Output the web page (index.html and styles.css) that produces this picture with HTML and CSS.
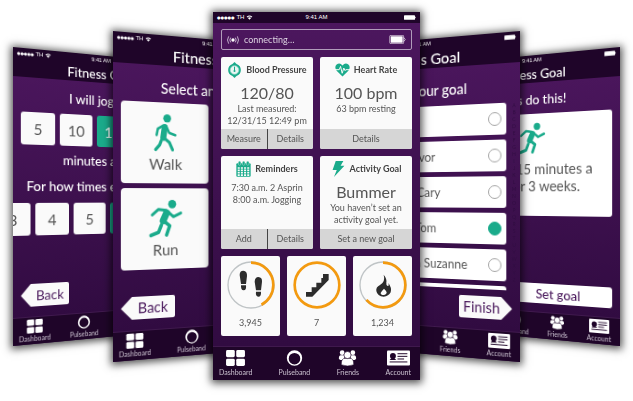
FILE: index.html
```html
<!DOCTYPE html>
<html lang="en">
<head>
<meta charset="utf-8">
<title>Fitness app</title>
<link rel="stylesheet" href="styles.css">
</head>
<body>
<svg class="defs" aria-hidden="true">
  <symbol id="wifi" viewBox="0 0 18 14"><path d="M1 5Q9-2 17 5L15 7Q9 2 3 7ZM4.500 8.500Q9 4.500 13.500 8.500L9 13.500Z" fill="currentColor"/></symbol>
  <symbol id="walk" viewBox="140 272 84 124">
    <g fill="none" stroke="currentColor" stroke-linecap="round" stroke-linejoin="round">
      <path d="M173 312 156 322 152 342M186 318 194 334 214 341" stroke-width="8"/>
      <path d="M179 316 174 350" stroke-width="20"/>
      <path d="M176 350 194 364 205 388M167 360 162 373 149 388" stroke-width="10"/>
    </g><circle cx="187" cy="288" r="13" fill="currentColor"/>
  </symbol>
  <symbol id="run" viewBox="125 25 112 120">
    <g fill="none" stroke="currentColor" stroke-linecap="round" stroke-linejoin="round">
      <path d="M182 60 158 57 138 74M190 66 206 80 230 69" stroke-width="9"/>
      <path d="M184 68 173 92" stroke-width="22"/>
      <path d="M176 94 194 108 184 136M167 106 158 128 134 137" stroke-width="11"/>
    </g><circle cx="202" cy="41" r="13" fill="currentColor"/>
  </symbol>
  <symbol id="dashboard" viewBox="0 0 52 44"><g fill="#fff"><rect width="24" height="20" rx="4"/><rect x="28" width="24" height="20" rx="4"/><rect y="24" width="24" height="20" rx="4"/><rect x="28" y="24" width="24" height="20" rx="4"/></g></symbol>
  <symbol id="pulse" viewBox="0 0 50 50"><path fill="#fff" fill-rule="evenodd" d="M25 1A24 24 0 1 0 25 49 24 24 0 1 0 25 1ZM25 9A18 18 0 1 1 25 45 18 18 0 1 1 25 9Z"/></symbol>
  <symbol id="friends" viewBox="0 0 60 54"><g fill="#fff"><circle cx="12" cy="9" r="8"/><circle cx="48" cy="9" r="8"/><path d="M1 30Q0 17 9 18H20L18 34H6ZM59 30Q60 17 51 18H40L42 34H54Z"/><g stroke="#1f0529" stroke-width="2"><path d="M9 50Q8 28 22 28H38Q52 28 51 50Q30 58 9 50Z"/><circle cx="30" cy="17" r="12"/></g></g></symbol>
  <symbol id="account" viewBox="0 0 70 46"><rect width="70" height="46" rx="3" fill="#fff"/><g stroke="#1f0529" stroke-width="3"><path d="M32 10H62M32 18H62M32 26H52M8 35H62"/></g><circle cx="18" cy="17" r="9" fill="#1f0529"/><path d="M8 29Q18 16 28 29Z" fill="#1f0529"/></symbol>
  <symbol id="gauge" viewBox="0 0 40 48"><path d="M20 0 26 6Q39 11 39 24 39 37 26 42L20 48 14 42Q1 37 1 24 1 11 14 6Z" fill="#1aab8b"/><circle cx="20" cy="24" r="13" fill="#e9f6f3" stroke="#8fd3c4" stroke-width="2"/><path d="M20 14V26" stroke="#1aab8b" stroke-width="3"/><circle cx="20" cy="27" r="3" fill="#1aab8b"/></symbol>
  <symbol id="heart" viewBox="0 0 46 40"><path d="M23 40 5 22Q-3 10 5 3 15-4 23 6 31-4 41 3 49 10 41 22Z" fill="#1aab8b"/><path d="M0 19H13L17 9 22 30 27 14 31 22 33 19H46" fill="none" stroke="#fafafa" stroke-width="3"/></symbol>
  <symbol id="calendar" viewBox="0 0 44 46"><rect x="1" y="6" width="42" height="40" rx="3" fill="#1aab8b"/><g fill="#1aab8b" stroke="#fafafa" stroke-width="1"><rect x="7" y="0" width="7" height="12" rx="3"/><rect x="19" y="0" width="7" height="12" rx="3"/><rect x="31" y="0" width="7" height="12" rx="3"/></g><path d="M5 20H39M5 27H39M5 34H39M5 41H39" stroke="#fafafa" stroke-width="5" stroke-dasharray="6 3.300"/></symbol>
  <symbol id="bolt" viewBox="0 0 34 46"><path d="M9 0H31L23 14H34L4 46 12 26H0Z" fill="#1aab8b"/></symbol>
  <symbol id="signal" viewBox="0 0 36 24"><circle cx="18" cy="12" r="5" fill="#fff"/><g fill="none" stroke="#d9cfe0" stroke-width="2.500"><path d="M11 5Q6 12 11 19M25 5Q30 12 25 19M5 1Q-2 12 5 23M31 1Q38 12 31 23"/></g></symbol>
  <symbol id="battery" viewBox="0 0 50 28"><rect x="1" y="1" width="43" height="26" rx="3" fill="none" stroke="#fff" stroke-width="2"/><rect x="4" y="4" width="37" height="20" fill="#fff"/><path d="M45 8Q53 14 45 20" fill="none" stroke="#fff" stroke-width="2"/></symbol>
  <symbol id="cell" viewBox="0 0 36 14"><rect width="33" height="14" rx="2" fill="#fff"/><path d="M34 4Q38 7 34 10Z" fill="#fff"/></symbol>
</svg>

<main class="stage">
  <section class="phone far left steps">
    <header class="top">
      <div class="status"><span class="carrier"><b>●●●●●</b> TH <svg class="wifi"><use href="#wifi"/></svg></span><span>9:41 AM</span><svg class="cell"><use href="#cell"/></svg></div>
      <h2>Fitness Goal</h2>
    </header>
    <div class="body">
      <p class="lead">I will jog for</p>
      <div class="choices"><button>5</button><button>10</button><button class="on">15</button></div>
      <p class="lead">minutes a day</p>
      <p class="lead wide">For how times each week?</p>
      <div class="choices scrolled"><button>3</button><button>4</button><button>5</button><button class="on">6</button></div>
      <button class="arrow back">Back</button>
    </div>
    <nav class="tabs"><a href="#dashboard"><svg><use href="#dashboard"/></svg>Dashboard</a><a href="#pulse"><svg><use href="#pulse"/></svg>Pulseband</a><a href="#friends"><svg><use href="#friends"/></svg>Friends</a><a href="#account"><svg><use href="#account"/></svg>Account</a></nav>
  </section>

  <section class="phone near left picker">
    <header class="top">
      <div class="status"><span class="carrier"><b>●●●●●</b> TH <svg class="wifi"><use href="#wifi"/></svg></span><span>9:41 AM</span><svg class="cell"><use href="#cell"/></svg></div>
      <h2>Fitness Goal</h2>
    </header>
    <div class="body">
      <p class="lead">Select an activity</p>
      <div class="activities">
        <button><svg><use href="#walk"/></svg>Walk</button>
        <button><svg><use href="#run"/></svg>Run</button>
      </div>
      <button class="arrow back">Back</button>
    </div>
    <nav class="tabs"><a href="#dashboard"><svg><use href="#dashboard"/></svg>Dashboard</a><a href="#pulse"><svg><use href="#pulse"/></svg>Pulseband</a><a href="#friends"><svg><use href="#friends"/></svg>Friends</a><a href="#account"><svg><use href="#account"/></svg>Account</a></nav>
  </section>

  <section class="phone main">
    <header class="top">
      <div class="status"><span class="carrier"><b>●●●●●</b> TH <svg class="wifi"><use href="#wifi"/></svg></span><span>9:41 AM</span><svg class="cell"><use href="#cell"/></svg></div>
    </header>
    <div class="body">
      <div class="device"><svg class="signal"><use href="#signal"/></svg><span>connecting…</span><svg class="battery"><use href="#battery"/></svg></div>
      <div class="cards">
        <article class="card">
          <h3><svg><use href="#gauge"/></svg>Blood Pressure</h3>
          <p class="big">120/80</p><p>Last measured:<br>12/31/15 12:49 pm</p>
          <footer><button>Measure</button><button>Details</button></footer>
        </article>
        <article class="card">
          <h3><svg><use href="#heart"/></svg>Heart Rate</h3>
          <p class="big">100 bpm</p><p>63 bpm resting</p>
          <footer><button>Details</button></footer>
        </article>
        <article class="card">
          <h3><svg><use href="#calendar"/></svg>Reminders</h3>
          <p>7:30 a.m. 2 Asprin<br>8:00 a.m. Jogging</p>
          <footer><button>Add</button><button>Details</button></footer>
        </article>
        <article class="card">
          <h3><svg><use href="#bolt"/></svg>Activity Goal</h3>
          <p class="big">Bummer</p><p>You haven’t set an<br>activity goal yet.</p>
          <footer><button>Set a new goal</button></footer>
        </article>
      </div>
      <div class="rings">
        <article class="ring"><svg viewBox="0 0 144 144"><circle class="track" cx="72" cy="72" r="69"/><circle class="arc" cx="72" cy="72" r="67" pathLength="100" stroke-dasharray="42 58"/>
          <g fill="#2c2c2c"><path d="M38 42Q38 29 49 29 61 30 60 45L57 69H42ZM42 73H57Q59 88 50 88 41 88 42 73Z"/><path d="M83 62Q84 48 94 48 106 49 105 62L102 88H87ZM87 92H102Q103 107 94 107 85 106 87 92Z"/></g></svg>3,945</article>
        <article class="ring"><svg viewBox="0 0 144 144"><circle class="arc" cx="72" cy="72" r="67"/>
          <path fill="#2c2c2c" d="M39 93H56V79H70V65H85V51H90V39H107V57L58 107H39Z"/></svg>7</article>
        <article class="ring"><svg viewBox="0 0 144 144"><circle class="track" cx="72" cy="72" r="69"/><circle class="arc" cx="72" cy="72" r="67" pathLength="100" stroke-dasharray="63 37"/>
          <path fill="#2c2c2c" d="M74 41Q84 53 82 65 81 74 86 75 91 76 88 66 99 80 95 94 89 106 74 107 55 106 52 90 50 78 63 72 80 62 74 41ZM75 83Q68 90 65 96 65 102 74 102 83 101 83 94 82 89 75 83Z" fill-rule="evenodd"/></svg>1,234</article>
      </div>
    </div>
    <nav class="tabs"><a href="#dashboard"><svg><use href="#dashboard"/></svg>Dashboard</a><a href="#pulse"><svg><use href="#pulse"/></svg>Pulseband</a><a href="#friends"><svg><use href="#friends"/></svg>Friends</a><a href="#account"><svg><use href="#account"/></svg>Account</a></nav>
  </section>

  <section class="phone near right people">
    <header class="top">
      <div class="status"><span class="carrier"><b>●●●●●</b> TH <svg class="wifi"><use href="#wifi"/></svg></span><span>9:41 AM</span><svg class="cell"><use href="#cell"/></svg></div>
      <h2>Fitness Goal</h2>
    </header>
    <div class="body">
      <p class="lead">Share your goal</p>
      <div class="roster">
        <div class="names">
          <label>Al<input type="radio" name="who"></label>
          <label>Trevor<input type="radio" name="who"></label>
          <label>Al Cary<input type="radio" name="who"></label>
          <label>S. Tom<input type="radio" name="who" checked></label>
          <label>Jon Suzanne<input type="radio" name="who"></label>
          <label><input type="radio" name="who" aria-label="Next person"></label>
        </div>
        <div class="index"><i>A</i><i>B</i><i>C</i><i>D</i><i>E</i><i>F</i><i>G</i><i>H</i><i>I</i><i>J</i><i>K</i><i>L</i><i>M</i><i>N</i><i>O</i><i>P</i><i>Q</i><i>R</i><i>S</i><i>T</i><i>U</i><i>V</i><i>W</i><i>X</i><i>Y</i><i>Z</i></div>
      </div>
      <button class="arrow next">Finish</button>
    </div>
    <nav class="tabs"><a href="#dashboard"><svg><use href="#dashboard"/></svg>Dashboard</a><a href="#pulse"><svg><use href="#pulse"/></svg>Pulseband</a><a href="#friends"><svg><use href="#friends"/></svg>Friends</a><a href="#account"><svg><use href="#account"/></svg>Account</a></nav>
  </section>

  <section class="phone far right confirm">
    <header class="top">
      <div class="status"><span class="carrier"><b>●●●●●</b> TH <svg class="wifi"><use href="#wifi"/></svg></span><span>9:41 AM</span><svg class="cell"><use href="#cell"/></svg></div>
      <h2>Fitness Goal</h2>
    </header>
    <div class="body">
      <p class="lead">Let’s do this!</p>
      <div class="summary"><svg><use href="#run"/></svg><p>Jog for 15 minutes a<br>day for 3 weeks.</p></div>
      <button class="set">Set goal</button>
    </div>
    <nav class="tabs"><a href="#dashboard"><svg><use href="#dashboard"/></svg>Dashboard</a><a href="#pulse"><svg><use href="#pulse"/></svg>Pulseband</a><a href="#friends"><svg><use href="#friends"/></svg>Friends</a><a href="#account"><svg><use href="#account"/></svg>Account</a></nav>
  </section>
</main>
</body>
</html>
```
FILE: styles.css
```css
* { box-sizing: border-box; }
body { margin: 0; background: #fff; font-family: Lato, "Open Sans", sans-serif; color: #555; }
h2, h3, p { margin: 0; font-weight: 400; }
button { border: 0; margin: 0; padding: 0; font: inherit; color: inherit; background: none; }
a { color: inherit; text-decoration: none; }
svg { flex: none; }
.defs { display: none; }

/* Coverflow of five phones; side phones run underneath their neighbours */
.stage { display: grid; grid-template-columns: 100px 100px 207px 100px 100px; justify-content: center; align-items: center; padding: 12px 0 20px; }
.phone { display: flex; flex-direction: column; background: linear-gradient(#4d175f, #2e0a3e); box-shadow: 0 1px 8px 2px rgba(0, 0, 0, .7); }
.body { flex: 1; display: flex; flex-direction: column; min-height: 0; padding: 0 8px; }
.main { z-index: 3; height: 368px; }
.near { z-index: 2; width: 212px; height: 331px; }
.far { z-index: 1; width: 190px; height: 299px; }
.left { justify-self: start; transform-origin: left center; }
.right { justify-self: end; transform-origin: right center; }
.near.left { transform: perspective(342px) rotateY(10deg); }
.near.right { transform: perspective(342px) rotateY(-10deg); }
.far.left { transform: perspective(276px) rotateY(10deg); }
.far.right { transform: perspective(276px) rotateY(-10deg); }

.top { background: #1f0529; color: #fff; }
.status { display: grid; grid-template-columns: 1fr auto 1fr; align-items: center; height: 11px; padding: 0 4px; font: 6px/11px "Liberation Sans", sans-serif; }
.carrier { display: flex; align-items: center; gap: 2px; }
.carrier b { font: 4px/11px "DejaVu Sans", sans-serif; }
.wifi { width: 7px; height: 5px; }
.cell { width: 12px; height: 5px; justify-self: end; }
.top h2 { text-align: center; font-size: 16px; font-weight: 500; line-height: 20px; }
.far .top h2 { font-size: 14px; line-height: 18px; }
.lead { color: #fff; text-align: center; font-size: 14px; font-weight: 500; line-height: 18px; white-space: nowrap; }

.tabs { display: flex; justify-content: space-between; height: 34px; padding: 3px 9px 0 6px; background: #1f0529; border-top: 1px solid #3f194d; color: #cbc2d0; font-size: 7px; line-height: 9px; }
.tabs a { display: flex; flex-direction: column; align-items: center; gap: 2px; }
.tabs svg { width: 23px; height: 16px; }
.near .tabs { height: 30px; padding-top: 2px; }
.near .tabs a, .far .tabs a { gap: 1px; }
.near .tabs svg { height: 15px; }
.far .tabs { height: 28px; padding-top: 2px; }
.far .tabs svg { height: 14px; width: 21px; }

/* Dashboard */
.main .body { padding: 6px 8px 10px; gap: 7px; }
.device { display: flex; align-items: center; gap: 5px; height: 21px; padding: 0 5px; border: 1px solid #b09cba; border-radius: 2px; color: #ddd3e2; font-size: 9px; }
.signal { width: 12px; height: 8px; }
.battery { width: 17px; height: 9px; margin-left: auto; }
.cards { display: grid; grid-template-columns: 1fr 1fr; grid-template-rows: 92px 93px; gap: 7px; }
.card { display: flex; flex-direction: column; overflow: hidden; border-radius: 2px; background: #fafafa; text-align: center; font-size: 9px; line-height: 12px; white-space: nowrap; }
.card h3 { display: flex; align-items: center; justify-content: center; gap: 4px; height: 26px; font-size: 9px; font-weight: 700; color: #444; }
.card h3 svg { width: 15px; height: 16px; }
.card .big { font-size: 16px; line-height: 20px; }
.card footer { display: flex; height: 20px; margin-top: auto; background: #d6d6d6; }
.card footer button { flex: 1; }
.card footer button + button { border-left: 1px solid #444; }
.rings { display: grid; grid-template-columns: 1fr 1fr 1fr; gap: 7px; height: 80px; }
.ring { display: flex; flex-direction: column; align-items: center; gap: 8px; padding-top: 5px; background: #fafafa; border-radius: 2px; font-size: 9px; line-height: 12px; }
.ring svg { width: 48px; height: 48px; }
.track { fill: none; stroke: #bfc4c6; stroke-width: 4; }
.arc { fill: none; stroke: #f39a10; stroke-width: 8; transform: rotate(-90deg); transform-origin: center; }

/* Arrow-shaped buttons */
.arrow { height: 23px; background: #fafafa; color: #4b1a5d; font-size: 15px; line-height: 23px; }
.back { align-self: flex-start; width: 57px; padding-left: 10px; border-radius: 0 2px 2px 0; clip-path: polygon(0 50%, 20% 0, 100% 0, 100% 100%, 20% 100%); }
.next { align-self: flex-end; width: 56px; padding-right: 8px; border-radius: 2px 0 0 2px; clip-path: polygon(0 0, 80% 0, 100% 50%, 80% 100%, 0 100%); }

/* Duration */
.steps .body { padding-top: 10px; overflow: hidden; }
.choices { display: flex; gap: 5px; margin: 7px 0 6px; }
.choices button { flex: none; width: 36px; height: 33px; border-radius: 3px; background: #fafafa; font-size: 16px; }
.choices .on { background: #1aab8b; color: #fff; }
.scrolled { margin: 8px 0 0 -26px; }
.steps .wide { margin-top: 9px; }
.steps .arrow { width: 51px; font-size: 14px; margin: auto 0 10px; }

/* Activity picker */
.near .body { padding-top: 14px; }
.near .lead { font-size: 15px; }
.activities { display: grid; grid-template-columns: 94px; gap: 5px; margin-top: 6px; }
.activities button { display: flex; flex-direction: column; align-items: center; justify-content: center; gap: 2px; height: 83px; border-radius: 4px; background: #fafafa; font-size: 16px; line-height: 20px; }
.activities svg { width: 38px; height: 40px; color: #1aab8b; }
.near .arrow { margin: auto 0 11px; }

/* People */
.roster { display: flex; gap: 4px; height: 189px; margin: 8px -6px 0 0; overflow: hidden; }
.names { flex: 1; display: flex; flex-direction: column; gap: 5px; }
.names label { flex: none; display: flex; align-items: center; justify-content: space-between; height: 32px; padding: 0 5px 0 78px; border-radius: 3px; background: #fff; font-size: 13px; }
.names input { appearance: none; margin: 0 0 0 auto; width: 14px; height: 14px; border: 1px solid #a5a5a5; border-radius: 50%; }
.names input:checked { border-color: #1aab8b; background: #1aab8b; }
.index { display: flex; flex-direction: column; width: 8px; color: #2f0b40; font-size: 5px; line-height: 7px; text-align: center; }
.index i { font-style: normal; }

/* Confirmation */
.confirm .body { padding-top: 9px; }
.summary { display: flex; flex-direction: column; align-items: center; gap: 6px; height: 108px; margin-top: 6px; padding-top: 9px; border-radius: 3px; background: #fff; text-align: center; font-size: 15px; line-height: 18px; white-space: nowrap; }
.summary svg { width: 36px; height: 34px; color: #1aab8b; }
.set { align-self: flex-end; width: 116px; height: 21px; margin: auto 0 9px; border-radius: 3px; background: #fff; color: #4b1a5d; font-size: 14px; font-weight: 500; }
```
